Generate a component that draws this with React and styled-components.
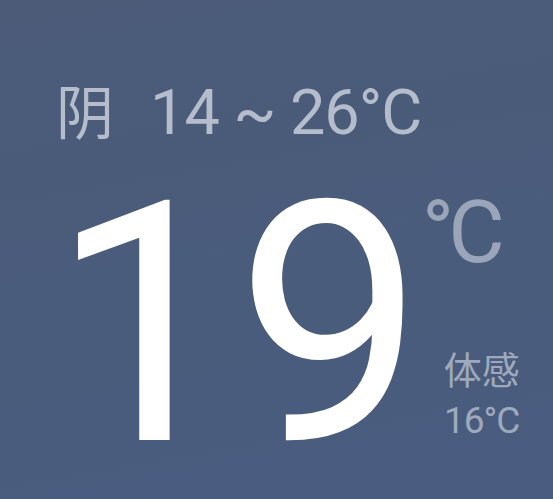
import styled, { createGlobalStyle } from "styled-components"

const Global = createGlobalStyle`
    html, body {
        margin: 0;
        padding: 0;
        background: #4b5c7a;
    }
    body {
        font-family: Roboto, "Noto Sans CJK SC", sans-serif;
    }
`

export default function App() {
    return (
        <>
            <Global />
            <Card>
                <Summary>
                    <Condition>阴</Condition>
                    <Range>14 ~ 26°C</Range>
                </Summary>
                <Main>
                    <Temp>19</Temp>
                    <Side>
                        <Unit>°C</Unit>
                        <Feels>
                            <FeelsLabel>体感</FeelsLabel>
                            <FeelsValue>16°C</FeelsValue>
                        </Feels>
                    </Side>
                </Main>
            </Card>
        </>
    )
}

const Card = styled.div`
    width: 553px;
    height: 499px;
    box-sizing: border-box;
    padding: 80px 0 0 56px;
    background: linear-gradient(170deg, #4b5b78 0%, #4a5c7c 60%, #4a5c80 100%);
    overflow: hidden;
`

const Summary = styled.div`
    display: flex;
    align-items: baseline;
    gap: 36px;
    color: #b5bdcc;
    font-size: 63px;
    line-height: 1;
    height: 63px;
`

const Condition = styled.span`
    font-family: "Noto Sans CJK SC", sans-serif;
    font-size: 58px;
    line-height: 1;
`

const Range = styled.span`
    font-family: Roboto, sans-serif;
    line-height: 1;
    letter-spacing: -1px;
`

const Main = styled.div`
    display: flex;
    margin-top: 14px;
`

const Temp = styled.div`
    font-family: Roboto, sans-serif;
    font-size: 336px;
    line-height: 1;
    color: #ffffff;
    margin-left: -6px;
    letter-spacing: -3px;
`

const Side = styled.div`
    display: flex;
    flex-direction: column;
    padding: 32px 0 50px 0;
`

const Unit = styled.div`
    font-size: 87px;
    line-height: 1;
    color: #9aa5b9;
    letter-spacing: -6px;
`

const Feels = styled.div`
    display: flex;
    flex-direction: column;
    align-items: center;
    color: #9ea9bc;
    margin: auto 0 0 22px;
`

const FeelsLabel = styled.div`
    font-family: "Noto Sans CJK SC", sans-serif;
    font-size: 38px;
    line-height: 1.2;
    margin-bottom: 8px;
`

const FeelsValue = styled.div`
    font-size: 37px;
    line-height: 1.2;
    letter-spacing: -1px;
`
